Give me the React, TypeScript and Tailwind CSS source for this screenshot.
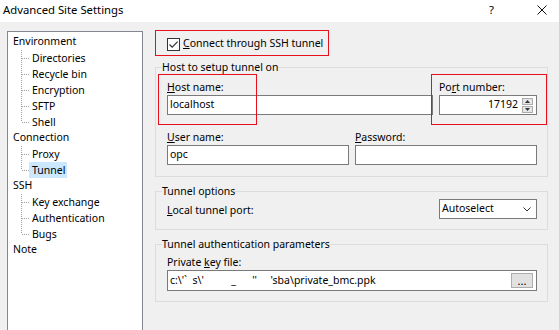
import React from 'react';

const envItems = ['Directories', 'Recycle bin', 'Encryption', 'SFTP', 'Shell'];
const connItems = ['Proxy', 'Tunnel'];
const sshItems = ['Key exchange', 'Authentication', 'Bugs'];

const TreeBranch = ({ last }: { last: boolean }) => (
  <svg width="8" height="16" className="shrink-0">
    <line x1="0.5" y1="0" x2="0.5" y2={last ? 8 : 16} stroke="#a0a0a0" strokeDasharray="1 1" />
    <line x1="1" y1="8.5" x2="8" y2="8.5" stroke="#a0a0a0" strokeDasharray="1 1" />
  </svg>
);

const TreeGroup = ({ title, items, selected }: { title: string; items: string[]; selected?: string }) => (
  <div>
    <div className="h-[16px] flex items-center pl-[5px]">{title}</div>
    {items.map((item, i) => (
      <div key={item} className="h-[16px] flex items-center pl-[13px]">
        <TreeBranch last={i === items.length - 1} />
        <span className={`pl-[3px] pr-[2px] leading-[16px] ${item === selected ? 'bg-[#cce8ff]' : ''}`}>{item}</span>
      </div>
    ))}
  </div>
);

const Field = ({ className = '', children }: { className?: string; children?: React.ReactNode }) => (
  <div className={`h-[20px] bg-white border border-[#7a7a7a] flex items-center ${className}`}>{children}</div>
);

const Group = ({ legend, className = '', children }: { legend: string; className?: string; children: React.ReactNode }) => (
  <fieldset className={`w-[393px] border border-[#dcdcdc] pl-[11px] pr-[10px] ${className}`}>
    <legend className="ml-[-5px] px-0 leading-[16px]">{legend}</legend>
    {children}
  </fieldset>
);

const App = () => {
  return (
    <div className="relative w-[559px] h-[330px] overflow-hidden bg-[#f0f0f0] font-['Noto_Sans',sans-serif] text-[10.5px] text-black">
      {/* title bar */}
      <div className="h-[22px] bg-white flex items-start">
        <div className="pl-[3px] pt-[1px] text-[11.3px] leading-[18px]">Advanced Site Settings</div>
        <div className="ml-auto pt-[1px] text-[11.3px] leading-[18px] pr-[43px]">?</div>
        <svg width="10" height="10" className="mt-[5px] mr-[12px]" viewBox="0 0 10 10">
          <path d="M0.5 0.5 L9.5 9.5 M9.5 0.5 L0.5 9.5" stroke="#111" strokeWidth="1" />
        </svg>
      </div>

      <div className="flex">
        {/* tree */}
        <div className="ml-[7px] mt-[9px] w-[136px] h-[310px] border border-[#828790] bg-white pt-[2px]">
          <TreeGroup title="Environment" items={envItems} />
          <TreeGroup title="Connection" items={connItems} selected="Tunnel" />
          <TreeGroup title="SSH" items={sshItems} />
          <div className="h-[16px] flex items-center pl-[5px]">Note</div>
        </div>

        {/* settings */}
        <div className="ml-[12px] mt-[8px]">
          <div className="w-[174px] h-[26px] border border-[#e8101c] flex items-center pl-[11px] pt-[2px]">
            <div className="w-[13px] h-[13px] border border-[#333] bg-white flex items-center justify-center">
              <svg width="11" height="11" viewBox="0 0 11 11">
                <path d="M1.5 5.5 L4.2 8.2 L9.6 2.6" fill="none" stroke="#333" strokeWidth="1.2" />
              </svg>
            </div>
            <span className="ml-[3px] whitespace-nowrap"><u>C</u>onnect through SSH tunnel</span>
          </div>

          <Group legend="Host to setup tunnel on" className="mt-[3px] pb-[11px]">
            <div className="flex gap-[6px] pt-[4px]">
              <div className="w-[266px]">
                <div className="h-[16px] leading-[16px]"><u>H</u>ost name:</div>
                <Field className="pl-[2px]">localhost</Field>
              </div>
              <div className="w-[98px]">
                <div className="h-[16px] leading-[16px]">Po<u>r</u>t number:</div>
                <Field className="justify-end pr-[3px]">
                  <span className="mr-[4px]">17192</span>
                  <div className="flex flex-col gap-[1px]">
                    <div className="w-[11px] h-[7px] bg-[#e6e6e6] border border-[#acacac] flex items-center justify-center">
                      <svg width="5" height="3" viewBox="0 0 5 3"><path d="M0 3 L2.5 0 L5 3 Z" fill="#333" /></svg>
                    </div>
                    <div className="w-[11px] h-[7px] bg-[#e6e6e6] border border-[#acacac] flex items-center justify-center">
                      <svg width="5" height="3" viewBox="0 0 5 3"><path d="M0 0 L2.5 3 L5 0 Z" fill="#333" /></svg>
                    </div>
                  </div>
                </Field>
              </div>
            </div>
            <div className="flex gap-[6px] mt-[14px]">
              <div className="w-[182px]">
                <div className="h-[16px] leading-[16px]"><u>U</u>ser name:</div>
                <Field className="pl-[2px]">opc</Field>
              </div>
              <div className="w-[182px]">
                <div className="h-[16px] leading-[16px]"><u>P</u>assword:</div>
                <Field />
              </div>
            </div>
          </Group>

          <Group legend="Tunnel options" className="mt-[6px] pb-[10px]">
            <div className="flex items-center justify-between">
              <div className="pt-[3px]"><u>L</u>ocal tunnel port:</div>
              <Field className="w-[98px] pl-[2px] pr-[5px] justify-between">
                <span>Autoselect</span>
                <svg width="8" height="5" viewBox="0 0 8 5">
                  <path d="M0.5 0.5 L4 4 L7.5 0.5" fill="none" stroke="#333" strokeWidth="1" />
                </svg>
              </Field>
            </div>
          </Group>

          <Group legend="Tunnel authentication parameters" className="mt-[6px] pb-[10px]">
            <div className="pt-[2px] h-[18px] leading-[16px]">Private <u>k</u>ey file:</div>
            <Field className="h-[21px] pl-[2px] pr-[3px] justify-between">
              <span className="whitespace-pre">{"c:\\'`  s\\'          _      ''     'sba\\private_bmc.ppk"}</span>
              <div className="w-[22px] h-[15px] bg-[#e1e1e1] border border-[#adadad] flex items-end justify-center leading-[12px] text-[11px]">...</div>
            </Field>
          </Group>
        </div>
      </div>

      {/* red annotation boxes */}
      <div className="absolute left-[158px] top-[74px] w-[99px] h-[51px] border border-[#e8101c]" />
      <div className="absolute left-[431px] top-[74px] w-[116px] h-[51px] border border-[#e8101c]" />
    </div>
  );
};

export default App;
